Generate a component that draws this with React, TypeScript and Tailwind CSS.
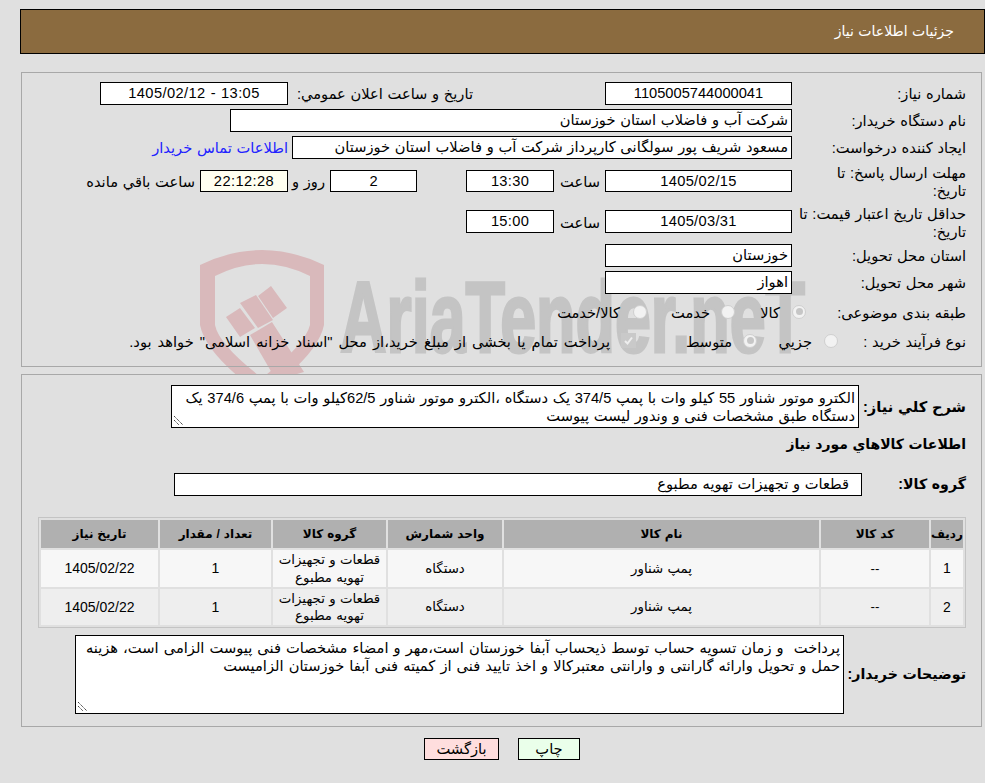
import React from "react";

const F = ({ w, children, bg = "bg-white", align = "text-center", h = "h-[23px]", ltr = false, cls = "" }: { w: string; children?: React.ReactNode; bg?: string; align?: string; h?: string; ltr?: boolean; cls?: string }) => (
  <div dir={ltr ? "ltr" : undefined} className={`${w} ${h} ${bg} ${align} ${cls} shrink-0 border border-black px-[3px] leading-[20px] overflow-hidden whitespace-nowrap`}>{children}</div>
);

const Radio = ({ on }: { on?: boolean }) => (
  <span className="relative -mt-[3px] inline-block h-[14px] w-[14px] shrink-0 rounded-full border border-[#cfcfcf] bg-[#f2f2f2]">
    {on ? <span className="absolute left-[2.5px] top-[2.5px] h-[7px] w-[7px] rounded-full bg-[#c6c6c6]" /> : null}
  </span>
);

const Check = () => (
  <svg className="-mt-[4px] shrink-0" width="15" height="15" viewBox="0 0 15 15">
    <rect width="15" height="15" fill="#c9c9c9" />
    <path d="M4 8L6.5 10.5L11 4.5" stroke="#eeeeee" strokeWidth="2" fill="none" />
  </svg>
);

const Grip = () => (
  <svg className="absolute bottom-[1px] left-[1px]" width="11" height="11" viewBox="0 0 11 11">
    <path d="M1 1L10 10M1 5L6 10" stroke="#444" strokeWidth="1" strokeDasharray="1.4 .6" fill="none" />
  </svg>
);

const Label = ({ children, cls = "w-[172px] ml-[2px]" }: { children: React.ReactNode; cls?: string }) => (
  <div className={`shrink-0 leading-[18px] ${cls}`}>{children}</div>
);

const rows = [
  ["1", "--", "پمپ شناور", "دستگاه", "1", "1405/02/22", "bg-[#f7f7f7]", "h-[37px]"],
  ["2", "--", "پمپ شناور", "دستگاه", "1", "1405/02/22", "bg-[#eeeeee]", "h-[36px]"],
];

export default function App() {
  return (
    <div dir="rtl" className="relative h-[783px] w-[985px] overflow-hidden bg-[#e0e0e0] pl-[19px] pt-[9px] font-['Liberation_Sans','DejaVu_Sans',sans-serif] text-[14.67px] text-black [word-spacing:0.6px]">
      <svg dir="ltr" className="absolute left-[190px] top-[240px]" width="640" height="135" viewBox="190 240 640 135" fill="none">
        <path fillRule="evenodd" d="M200 265Q262 235 324 265V325Q318 355 262 395Q206 355 200 325ZM215 276Q262 252 310 276V325Q305 345 262 378Q219 345 215 325Z" fill="#d9b9bb" />
        <path d="M226 317L240 308L255 328L240 337ZM240 303L256 295L273 320L258 328ZM258 296L271 286L287 308L273 318ZM250 335L272 322L304 372L276 380Z" fill="#d9b9bb" />
        <text x="340" y="352" direction="ltr" fontFamily="'Liberation Sans',sans-serif" fontWeight="700" fontSize="100" fill="#c4c4c4" stroke="#c4c4c4" strokeWidth="3" textLength="465" lengthAdjust="spacingAndGlyphs">AriaTender.neT</text>
      </svg>

      <div className="relative flex h-[45px] w-[965px] items-center border border-black bg-[#8b6b3f] pr-[30px] pb-[1px] text-[14px] text-white">جزئیات اطلاعات نیاز</div>

      <div className="relative ml-[2px] mr-[3px] mt-[18px] h-[295px] border border-[#a8a8a8] pr-[15px] pt-[9px]">
        <div className="flex h-[23px] items-center">
          <Label>شماره نیاز:</Label>
          <F w="w-[187px]">1105005744000041</F>
          <div className="mr-[132px] w-[180px] whitespace-nowrap">تاریخ و ساعت اعلان عمومي:</div>
          <div className="mr-[5px]"><F w="w-[188px]" ltr cls="tracking-[0.4px]">1405/02/12 - 13:05</F></div>
        </div>
        <div className="mt-[4px] flex h-[23px] items-center">
          <Label>نام دستگاه خریدار:</Label>
          <F w="w-[562px]" align="text-right">شرکت آب و فاضلاب استان خوزستان</F>
        </div>
        <div className="mt-[4px] flex h-[23px] items-center">
          <Label>ایجاد کننده درخواست:</Label>
          <F w="w-[500px]" align="text-right">مسعود شریف پور سولگانی کارپرداز شرکت آب و فاضلاب استان خوزستان</F>
          <div className="mr-[4px] whitespace-nowrap text-[#2222ff]">اطلاعات تماس خریدار</div>
        </div>
        <div className="mt-[5px] flex h-[36px] items-center">
          <Label>مهلت ارسال پاسخ: تا<br />تاریخ:</Label>
          <div className="pb-[2px]"><F w="w-[187px]" h="h-[22px]" cls="tracking-[0.3px]">1405/02/15</F></div>
          <div className="mr-[5px] w-[46px] whitespace-nowrap">ساعت</div>
          <div className="pb-[2px]"><F w="w-[88px]" h="h-[22px]" cls="tracking-[0.3px]">13:30</F></div>
          <div className="w-[49px]" />
          <div className="pb-[2px]"><F w="w-[87px]" h="h-[22px]">2</F></div>
          <div className="mr-[5px] w-[37px] whitespace-nowrap">روز و</div>
          <div className="pb-[2px]"><F w="w-[88px]" h="h-[22px]" bg="bg-[#fffff0]" cls="tracking-[0.4px]">22:12:28</F></div>
          <div className="mr-[5px] whitespace-nowrap">ساعت باقي مانده</div>
        </div>
        <div className="mt-[5px] flex h-[36px] items-center">
          <Label>حداقل تاریخ اعتبار قیمت: تا<br />تاریخ:</Label>
          <div className="pb-[3px]"><F w="w-[187px]" cls="tracking-[0.3px]">1405/03/31</F></div>
          <div className="mr-[5px] w-[46px] whitespace-nowrap">ساعت</div>
          <div className="pb-[3px]"><F w="w-[88px]" cls="tracking-[0.3px]">15:00</F></div>
        </div>
        <div className="mt-[3px] flex h-[23px] items-center">
          <Label>استان محل تحویل:</Label>
          <F w="w-[187px]" align="text-right">خوزستان</F>
        </div>
        <div className="mt-[4px] flex h-[23px] items-center">
          <Label>شهر محل تحویل:</Label>
          <F w="w-[187px]" align="text-right">اهواز</F>
        </div>
        <div className="mt-[9px] flex h-[20px] items-center">
          <Label cls="w-[155px] ml-[5px]">طبقه بندی موضوعی:</Label>
          <div className="flex w-[71px] items-center"><Radio on /><span className="mr-[12px]">کالا</span></div>
          <div className="flex w-[88px] items-center"><Radio /><span className="mr-[11px]">خدمت</span></div>
          <div className="flex items-center"><Radio /><span className="mr-[13px]">کالا/خدمت</span></div>
        </div>
        <div className="mt-[9px] flex h-[20px] items-center">
          <Label cls="w-[128px]">نوع فرآیند خرید :</Label>
          <div className="flex w-[81px] items-center"><Radio /><span className="mr-[12px]">جزیي</span></div>
          <div className="flex w-[121px] items-center"><Radio on /><span className="mr-[11px]">متوسط</span></div>
          <Check />
          <div className="mr-[11px] whitespace-nowrap [word-spacing:2px]">پرداخت تمام یا بخشی از مبلغ خرید،از محل "اسناد خزانه اسلامی" خواهد بود.</div>
        </div>
      </div>

      <div className="relative ml-[2px] mr-[3px] mt-[7px] h-[353px] border border-[#a8a8a8] bg-[#e0e0e0] pr-[15px] pt-[10px]">
        <div className="flex h-[43px] items-center">
          <div className="w-[107px] shrink-0 whitespace-nowrap text-[14.67px] font-bold">شرح کلي نیاز:</div>
          <div className="relative h-[43px] w-[688px] border border-black bg-white px-[3px] pt-[3px] leading-[18px]">
            الکترو موتور شناور 55 کیلو وات با پمپ 374/5 یک دستگاه ،الکترو موتور شناور 62/5کیلو وات با پمپ 374/6 یک دستگاه طبق مشخصات فنی و وندور لیست پیوست
            <Grip />
          </div>
        </div>
        <div className="mt-[5px] h-[22px] whitespace-nowrap text-[14px] font-bold leading-[22px]">اطلاعات کالاهاي مورد نیاز</div>
        <div className="mt-[18px] flex h-[23px] items-center">
          <div className="w-[104px] shrink-0 whitespace-nowrap text-[14.2px] font-bold">گروه کالا:</div>
          <div className="h-[23px] w-[688px] border border-black bg-white pr-[12px] leading-[20px]">قطعات و تجهیزات تهویه مطبوع</div>
        </div>
        <div className="mt-[21px] w-[928px] border border-[#c4c4c4]">
          <table className="w-full table-fixed border-separate border-spacing-[2px] text-center text-[13.33px]">
            <colgroup>
              <col className="w-[32px]" /><col className="w-[108px]" /><col className="w-[315px]" /><col className="w-[114px]" /><col className="w-[113px]" /><col className="w-[111px]" /><col className="w-[117px]" />
            </colgroup>
            <thead>
              <tr className="h-[28px] bg-[#b0b0b0] text-[12px] font-bold">
                {["ردیف", "کد کالا", "نام کالا", "واحد شمارش", "گروه کالا", "تعداد / مقدار", "تاریخ نیاز"].map((t) => (
                  <th key={t} className="whitespace-nowrap p-0">{t}</th>
                ))}
              </tr>
            </thead>
            <tbody>
              {rows.map((r) => (
                <tr key={r[0]} className={`${r[7]} ${r[6]}`}>
                  <td className="p-0 text-[14px]">{r[0]}</td>
                  <td className="p-0">{r[1]}</td>
                  <td className="p-0">{r[2]}</td>
                  <td className="p-0">{r[3]}</td>
                  <td className="p-0 leading-[17.5px]">قطعات و تجهیزات تهویه مطبوع</td>
                  <td className="p-0 text-[14px]">{r[4]}</td>
                  <td className="p-0 text-[14px]">{r[5]}</td>
                </tr>
              ))}
            </tbody>
          </table>
        </div>
        <div className="mt-[7px] flex h-[79px] items-center">
          <div className="w-[122px] shrink-0 whitespace-nowrap text-[14.2px] font-bold">توضیحات خریدار:</div>
          <div className="relative h-[79px] w-[769px] border border-black bg-white px-[3px] pt-[3px] leading-[18px] [word-spacing:1px]">
            پرداخت&nbsp; و زمان تسویه حساب توسط ذیحساب آبفا خوزستان است،مهر و امضاء مشخصات فنی پیوست الزامی است، هزینه حمل و تحویل وارائه گارانتی و وارانتی معتبرکالا و اخذ تایید فنی از کمیته فنی آبفا خوزستان الزامیست
            <Grip />
          </div>
        </div>
      </div>

      <div className="relative mt-[11px] flex justify-center gap-[19px]">
        <button className="h-[22px] w-[62px] border border-black bg-[#eaffea] leading-[19px]">چاپ</button>
        <button className="h-[22px] w-[75px] border border-black bg-[#ffdede] leading-[19px]">بازگشت</button>
      </div>
    </div>
  );
}
